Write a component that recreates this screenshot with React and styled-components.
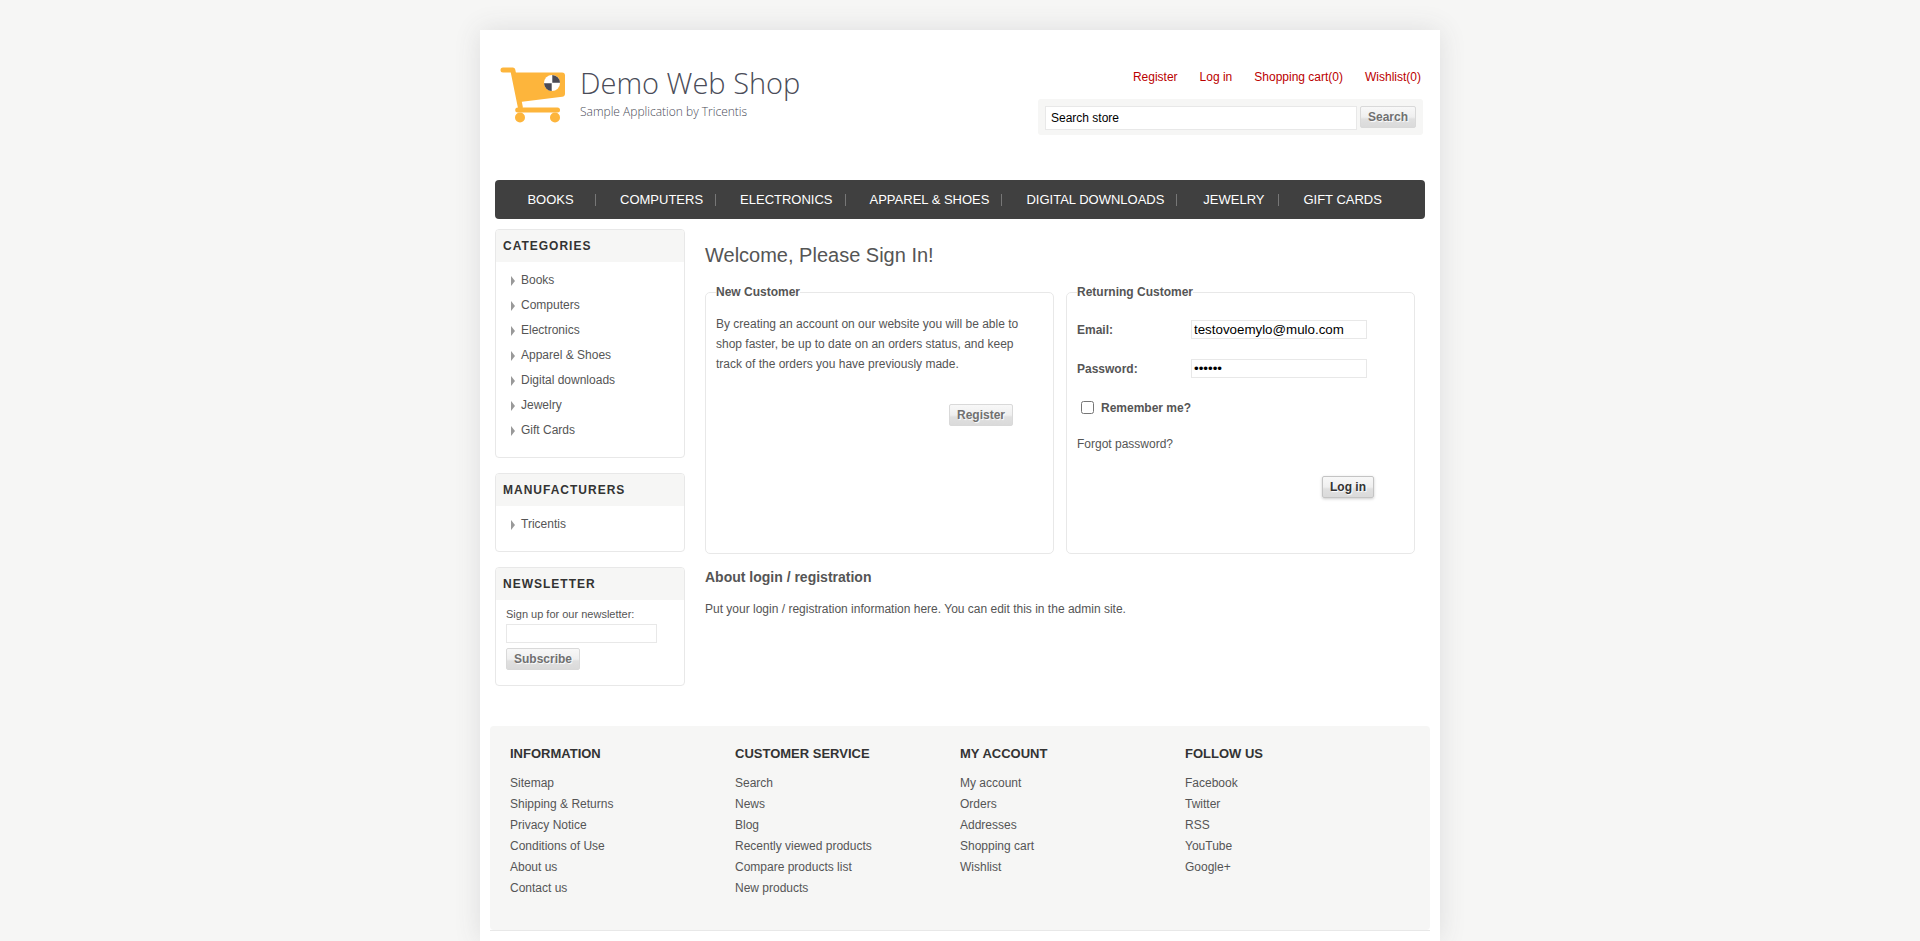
import React from "react";
import styled, { createGlobalStyle } from "styled-components";

const GlobalStyle = createGlobalStyle`
  *, *::before, *::after { box-sizing: border-box; }
  body {
    margin: 0;
    background: #f6f6f5;
    color: #555;
    font: 12px/20px "Liberation Sans", Arial, sans-serif;
  }
  a { color: inherit; text-decoration: none; }
  ul { list-style: none; margin: 0; padding: 0; }
  h1, h2, h3, p { margin: 0; }
  input, button { font-family: inherit; }
`;

const Page = styled.div`
  display: flex;
  justify-content: center;
  min-height: 100vh;
  padding-top: 30px;
`;

const Sheet = styled.div`
  flex: 1;
  min-width: 0;
  max-width: 960px;
  background: #fff;
  box-shadow: 0 0 25px #ddd;
`;

const Header = styled.header`
  display: flex;
  justify-content: space-between;
  align-items: flex-start;
  padding: 37px 17px 45px 20px;
`;

const LogoLink = styled.a`
  display: flex;
  gap: 14px;
  font-family: "Open Sans", sans-serif;
  font-weight: 300;
  color: #4a4c58;
`;

const LogoName = styled.div`
  font-size: 29px;
  line-height: 32px;
`;

const LogoTagline = styled.div`
  margin-top: 3px;
  font-size: 12px;
  line-height: 20px;
`;

const HeaderTools = styled.div`
  width: 385px;
`;

const AccountLinks = styled.ul`
  display: flex;
  justify-content: flex-end;
  gap: 22px;
  padding-right: 2px;
  margin-bottom: 12px;
  color: #b00;
`;

const SearchForm = styled.form`
  display: flex;
  align-items: flex-start;
  gap: 3px;
  padding: 7px 7px 5px;
  border-radius: 3px;
  background: #f6f6f5;
`;

const TextField = styled.input`
  width: 100%;
  max-width: ${(p) => p.$max || "none"};
  height: 19px;
  padding: 0 2px;
  border: 1px solid #e8e8e8;
  border-radius: 0;
  background: #fff;
  color: #000;
`;

const SearchField = styled(TextField)`
  flex: 1;
  min-width: 0;
  height: 24px;
  padding: 0 5px;
  font-size: 12px;
`;

const Button = styled.button`
  height: 22px;
  padding: 0 7px;
  border: 1px solid ${(p) => (p.$strong ? "#c4c4c4" : "#d9d9d9")};
  border-radius: 2px;
  background: linear-gradient(#f8f8f8, #efefef 50%, #e0e0e0 60%, #dadada);
  box-shadow: ${(p) => (p.$strong ? "0 1px 3px #ccc" : "none")};
  color: ${(p) => (p.$strong ? "#333" : "#707070")};
  font-size: 12px;
  font-weight: bold;
  line-height: 20px;
  text-shadow: 1px 1px 1px #fff;
  cursor: pointer;
`;

const Nav = styled.nav`
  margin: 0 15px 10px;
  border-radius: 4px;
  background: #404040;
`;

const NavList = styled.ul`
  display: flex;
  height: 39px;
  align-items: center;
`;

const NavItem = styled.li`
  display: flex;
  align-items: center;
  gap: 12px;
  padding-left: 23px;
  color: #fff;
  font-size: 13px;
  text-transform: uppercase;
  white-space: nowrap;

  & + & {
    padding-left: 24px;
  }

  a {
    min-width: 65px;
    text-align: center;
  }

  &:not(:last-child)::after {
    content: "";
    width: 1px;
    height: 12px;
    background: #777;
  }
`;

const Columns = styled.div`
  display: flex;
  gap: 20px;
  padding: 0 15px;
  margin-bottom: 40px;
`;

const Sidebar = styled.aside`
  display: flex;
  flex-direction: column;
  gap: 15px;
  width: 190px;
`;

const Block = styled.section`
  overflow: hidden;
  border: 1px solid #e8e8e8;
  border-radius: 4px;
`;

const BlockTitle = styled.h3`
  padding: 0 7px;
  background: #f6f6f5;
  color: #333;
  font-size: 12px;
  line-height: 32px;
  letter-spacing: 1px;
  text-transform: uppercase;
`;

const BlockList = styled.ul`
  padding: 6px 15px 14px;
`;

const BlockItem = styled.li`
  display: flex;
  align-items: center;
  gap: 6px;
  line-height: 25px;

  &::before {
    content: "";
    border-left: 4px solid #999;
    border-top: 5px solid transparent;
    border-bottom: 5px solid transparent;
  }
`;

const NewsletterForm = styled.form`
  padding: 5px 10px 15px;
  display: flex;
  flex-direction: column;
  align-items: flex-start;

  label {
    font-size: 11px;
    line-height: 19px;
  }

  button {
    margin-top: 5px;
  }
`;

const Main = styled.main`
  flex: 1;
  min-width: 0;
  padding: 6px 10px 0 0;
`;

const PageTitle = styled.h1`
  margin-bottom: 10px;
  font-size: 20px;
  font-weight: normal;
  line-height: 40px;
`;

const Panels = styled.div`
  display: flex;
  gap: 12px;
`;

const Panel = styled.fieldset`
  flex: 1;
  min-width: 0;
  min-height: 269px;
  margin: 0;
  padding: ${(p) => p.$top} 10px 10px;
  border: 1px solid #e8e8e8;
  border-radius: 5px;
`;

const PanelTitle = styled.legend`
  padding: 0;
  font-weight: bold;
  line-height: 15px;
`;

const PanelText = styled.p`
  padding-right: 20px;
`;

const Actions = styled.div`
  display: flex;
  justify-content: flex-end;
  margin-top: ${(p) => p.$gap};
  padding-right: 30px;
`;

const FieldRow = styled.div`
  display: flex;
  align-items: center;
  height: 19px;
  margin-bottom: 20px;
  font-weight: bold;

  label {
    width: 114px;
  }
`;

const RememberRow = styled.div`
  display: flex;
  align-items: center;
  gap: 7px;
  height: 19px;
  margin-bottom: 17px;
  font-weight: bold;

  input {
    width: 13px;
    height: 13px;
    margin: 0 0 0 4px;
  }
`;

const AboutTitle = styled.h2`
  margin: 13px 0 12px;
  font-size: 14px;
  line-height: 20px;
`;

const Footer = styled.footer`
  margin: 0 10px;
`;

const FooterMenu = styled.div`
  display: grid;
  grid-template-columns: repeat(4, 1fr);
  padding: 18px 20px 31px;
  border-radius: 4px;
  background: #f6f6f5;
`;

const FooterTitle = styled.h3`
  margin-bottom: 9px;
  color: #333;
  font-size: 13px;
  line-height: 20px;
  text-transform: uppercase;
`;

const FooterLink = styled.li`
  line-height: 21px;
`;

const FooterEnd = styled.div`
  border-top: 1px solid #e8e8e8;
`;

const categories = ["Books", "Computers", "Electronics", "Apparel & Shoes", "Digital downloads", "Jewelry", "Gift Cards"];

const footerColumns = [
  { title: "Information", links: ["Sitemap", "Shipping & Returns", "Privacy Notice", "Conditions of Use", "About us", "Contact us"] },
  { title: "Customer service", links: ["Search", "News", "Blog", "Recently viewed products", "Compare products list", "New products"] },
  { title: "My account", links: ["My account", "Orders", "Addresses", "Shopping cart", "Wishlist"] },
  { title: "Follow us", links: ["Facebook", "Twitter", "RSS", "YouTube", "Google+"] },
];

function CartLogo() {
  return (
    <svg width="66" height="57" viewBox="0 0 66 57" aria-hidden="true">
      <g fill="none" stroke="#fdb53c" strokeWidth="5" strokeLinecap="round" strokeLinejoin="round">
        <path d="M3 3H12.8L20.3 40" />
        <path d="M17.7 43H57.5" />
      </g>
      <path d="M13.5 5.5H62Q65 5.5 65 8.5V26.7Q65 29.3 62.2 29.8L20 35Z" fill="#fdb53c" />
      <circle cx="20" cy="50.5" r="5" fill="#fdb53c" />
      <circle cx="55" cy="50.5" r="5" fill="#fdb53c" />
      <circle cx="52" cy="16" r="8" fill="#fff" />
      <path d="M52.3 15.7V8A8 8 0 0 1 60 15.7ZM51.7 16.3H44A8 8 0 0 0 51.7 24Z" fill="#4a4a55" />
    </svg>
  );
}

function LinkBlock({ title, items }) {
  return (
    <Block>
      <BlockTitle>{title}</BlockTitle>
      <BlockList>
        {items.map((item) => (
          <BlockItem key={item}><a href="#">{item}</a></BlockItem>
        ))}
      </BlockList>
    </Block>
  );
}

export default function App() {
  const stay = (event) => event.preventDefault();
  return (
    <>
      <GlobalStyle />
      <Page>
        <Sheet>
          <Header>
            <LogoLink href="#">
              <CartLogo />
              <div>
                <LogoName>Demo Web Shop</LogoName>
                <LogoTagline>Sample Application by Tricentis</LogoTagline>
              </div>
            </LogoLink>
            <HeaderTools>
              <AccountLinks>
                {["Register", "Log in", "Shopping cart(0)", "Wishlist(0)"].map((t) => (
                  <li key={t}><a href="#">{t}</a></li>
                ))}
              </AccountLinks>
              <SearchForm onSubmit={stay}>
                <SearchField type="text" aria-label="Search store" defaultValue="Search store" />
                <Button type="submit">Search</Button>
              </SearchForm>
            </HeaderTools>
          </Header>

          <Nav>
            <NavList>
              {categories.map((c) => (
                <NavItem key={c}><a href="#">{c}</a></NavItem>
              ))}
            </NavList>
          </Nav>

          <Columns>
            <Sidebar>
              <LinkBlock title="Categories" items={categories} />
              <LinkBlock title="Manufacturers" items={["Tricentis"]} />
              <Block>
                <BlockTitle>Newsletter</BlockTitle>
                <NewsletterForm onSubmit={stay}>
                  <label htmlFor="newsletter">Sign up for our newsletter:</label>
                  <TextField id="newsletter" type="text" $max="151px" />
                  <Button type="submit">Subscribe</Button>
                </NewsletterForm>
              </Block>
            </Sidebar>

            <Main>
              <PageTitle>Welcome, Please Sign In!</PageTitle>
              <Panels>
                <Panel $top="14px">
                  <PanelTitle>New Customer</PanelTitle>
                  <PanelText>
                    By creating an account on our website you will be able to shop faster, be up to date on an
                    orders status, and keep track of the orders you have previously made.
                  </PanelText>
                  <Actions $gap="30px">
                    <Button type="button">Register</Button>
                  </Actions>
                </Panel>
                <Panel $top="20px">
                  <PanelTitle>Returning Customer</PanelTitle>
                  <FieldRow>
                    <label htmlFor="email">Email:</label>
                    <TextField id="email" type="text" $max="176px" defaultValue="testovoemylo@mulo.com" />
                  </FieldRow>
                  <FieldRow>
                    <label htmlFor="password">Password:</label>
                    <TextField id="password" type="password" $max="176px" defaultValue="secret" />
                  </FieldRow>
                  <RememberRow>
                    <input id="remember" type="checkbox" />
                    <label htmlFor="remember">Remember me?</label>
                  </RememberRow>
                  <p><a href="#">Forgot password?</a></p>
                  <Actions $gap="22px">
                    <Button type="button" $strong>Log in</Button>
                  </Actions>
                </Panel>
              </Panels>
              <AboutTitle>About login / registration</AboutTitle>
              <p>Put your login / registration information here. You can edit this in the admin site.</p>
            </Main>
          </Columns>

          <Footer>
            <FooterMenu>
              {footerColumns.map((col) => (
                <div key={col.title}>
                  <FooterTitle>{col.title}</FooterTitle>
                  <ul>
                    {col.links.map((l) => (
                      <FooterLink key={l}><a href="#">{l}</a></FooterLink>
                    ))}
                  </ul>
                </div>
              ))}
            </FooterMenu>
            <FooterEnd />
          </Footer>
        </Sheet>
      </Page>
    </>
  );
}
